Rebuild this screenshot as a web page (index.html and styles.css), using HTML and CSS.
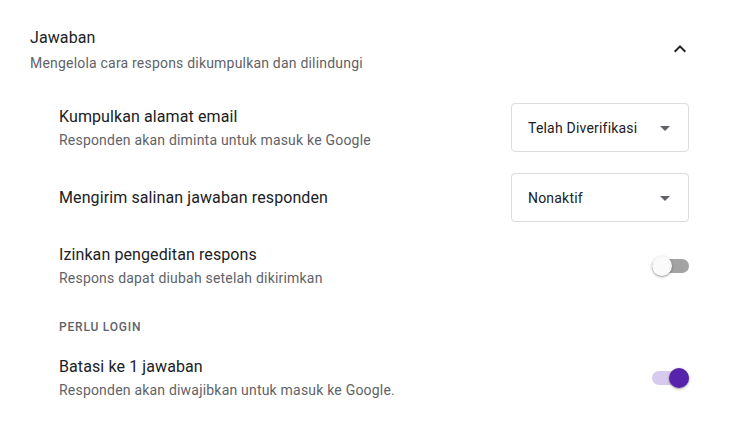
FILE: index.html
```html
<!DOCTYPE html>
<html lang="id">
<head>
<meta charset="utf-8">
<title>Jawaban</title>
<link rel="stylesheet" href="styles.css">
</head>
<body>
<section class="panel">
  <header class="panel-head">
    <div class="head-text">
      <div class="title">Jawaban</div>
      <div class="subtitle head-sub">Mengelola cara respons dikumpulkan dan dilindungi</div>
    </div>
    <svg class="chevron" width="24" height="24" viewBox="0 0 24 24"><path d="M12 8l-6 6 1.41 1.41L12 10.83l4.59 4.58L18 14z" fill="#202124"/></svg>
  </header>

  <div class="list">
    <div class="row row-select">
      <div class="text">
        <div class="label">Kumpulkan alamat email</div>
        <div class="subtitle desc">Responden akan diminta untuk masuk ke Google</div>
      </div>
      <div class="select">
        <span class="select-value">Telah Diverifikasi</span>
        <svg class="drop" width="24" height="24" viewBox="0 0 24 24"><path d="M7 10l5 5 5-5z" fill="#5f6368"/></svg>
      </div>
    </div>

    <div class="row row-select gap-21">
      <div class="text">
        <div class="label">Mengirim salinan jawaban responden</div>
      </div>
      <div class="select">
        <span class="select-value">Nonaktif</span>
        <svg class="drop" width="24" height="24" viewBox="0 0 24 24"><path d="M7 10l5 5 5-5z" fill="#5f6368"/></svg>
      </div>
    </div>

    <div class="row gap-21">
      <div class="text">
        <div class="label">Izinkan pengeditan respons</div>
        <div class="subtitle desc">Respons dapat diubah setelah dikirimkan</div>
      </div>
      <div class="switch">
        <span class="track"></span>
        <span class="thumb"></span>
      </div>
    </div>

    <div class="section-label">PERLU LOGIN</div>

    <div class="row gap-20">
      <div class="text">
        <div class="label">Batasi ke 1 jawaban</div>
        <div class="subtitle desc">Responden akan diwajibkan untuk masuk ke Google.</div>
      </div>
      <div class="switch on">
        <span class="track"></span>
        <span class="thumb"></span>
      </div>
    </div>
  </div>
</section>
</body>
</html>
```

FILE: styles.css
```css
html, body {
  margin: 0;
  padding: 0;
  background: #ffffff;
}

body {
  font-family: Roboto, "Noto Sans", Arial, sans-serif;
  color: #202124;
}

.panel {
  padding: 26px 41px 0 30px;
}

.panel-head {
  display: flex;
  justify-content: space-between;
  align-items: flex-start;
}

.title {
  font-size: 16px;
  line-height: 24px;
  color: #202124;
  letter-spacing: 0.1px;
}

.subtitle {
  font-size: 14px;
  line-height: 20px;
  color: #5f6368;
  letter-spacing: 0.2px;
}

.head-sub {
  margin-top: 3px;
}

.chevron {
  margin-top: 11px;
  margin-right: -3px;
  display: block;
}

.list {
  margin-top: 30px;
  padding-left: 29px;
  display: flex;
  flex-direction: column;
}

.row {
  display: flex;
  justify-content: space-between;
  align-items: center;
}

.gap-21 { margin-top: 21px; }
.gap-20 { margin-top: 20px; }

.label {
  font-size: 16px;
  line-height: 24px;
  color: #202124;
  letter-spacing: 0.1px;
}

.desc {
  margin-top: 1px;
}

.select {
  box-sizing: border-box;
  width: 178px;
  height: 49px;
  border: 1px solid #dadce0;
  border-radius: 4px;
  display: flex;
  align-items: center;
  justify-content: space-between;
  padding: 0 11px 0 16px;
}

.select-value {
  font-size: 14px;
  color: #202124;
  letter-spacing: 0.2px;
}

.drop {
  display: block;
}

.switch {
  position: relative;
  width: 37px;
  height: 20px;
}

.track {
  position: absolute;
  left: 0;
  right: 0;
  top: 3px;
  height: 14px;
  border-radius: 7px;
  background: #a3a3a3;
}

.thumb {
  position: absolute;
  top: 0;
  left: 0;
  width: 20px;
  height: 20px;
  border-radius: 50%;
  background: #fafafa;
  box-shadow: 0 1px 3px rgba(0, 0, 0, 0.3), 0 1px 1px rgba(0, 0, 0, 0.14);
}

.switch.on .track {
  background: #d6cbee;
}

.switch.on .thumb {
  left: auto;
  right: 0;
  background: #5723ac;
}

.section-label {
  margin-top: 31px;
  font-size: 12px;
  line-height: 16px;
  font-weight: 500;
  letter-spacing: 0.8px;
  color: #5f6368;
}
```
